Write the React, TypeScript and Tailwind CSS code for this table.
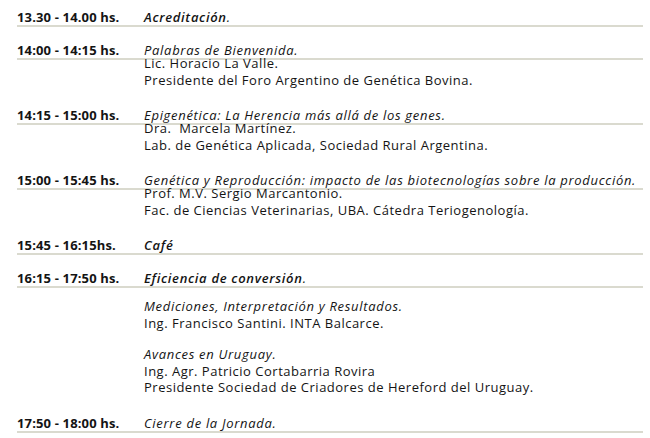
type Item = {
  time: string;
  title: React.ReactNode;
  lines?: string[];
};

const items: Item[] = [
  {
    time: "13.30 - 14.00 hs.",
    title: (
      <>
        <span className="font-semibold">Acreditación</span>.
      </>
    ),
  },
  {
    time: "14:00 - 14:15 hs.",
    title: "Palabras de Bienvenida.",
    lines: ["Lic. Horacio La Valle.", "Presidente del Foro Argentino de Genética Bovina."],
  },
  {
    time: "14:15 - 15:00 hs.",
    title: "Epigenética: La Herencia más allá de los genes.",
    lines: ["Dra.  Marcela Martínez.", "Lab. de Genética Aplicada, Sociedad Rural Argentina."],
  },
  {
    time: "15:00 - 15:45 hs.",
    title: "Genética y Reproducción: impacto de las biotecnologías sobre la producción.",
    lines: ["Prof. M.V. Sergio Marcantonio.", "Fac. de Ciencias Veterinarias, UBA. Cátedra Teriogenología."],
  },
  {
    time: "15:45 - 16:15hs.",
    title: <span className="font-semibold">Café</span>,
  },
  {
    time: "16:15 - 17:50 hs.",
    title: (
      <>
        <span className="font-semibold">Eficiencia de conversión</span>.
      </>
    ),
    lines: [
      "",
      "Mediciones, Interpretación y Resultados.|i",
      "Ing. Francisco Santini. INTA Balcarce.",
      "",
      "Avances en Uruguay.|i",
      "Ing. Agr. Patricio Cortabarria Rovira",
      "Presidente Sociedad de Criadores de Hereford del Uruguay.",
    ],
  },
  {
    time: "17:50 - 18:00 hs.",
    title: "Cierre de la Jornada.",
  },
];

const Row = ({ item }: { item: Item }) => {
  return (
    <div className={item.lines ? "pb-[4px]" : ""}>
      <div className="flex border-b-2 border-[#dadacf] pb-px text-[13px] leading-[13px]">
        <div className="w-[127px] shrink-0 font-bold tracking-[0.15px]">{item.time}</div>
        <div className="italic tracking-[0.7px]">{item.title}</div>
      </div>
      {item.lines && (
        <div className="-mt-[5px] pl-[127px] text-[13px] leading-[16.5px]">
          {item.lines.map((l, i) => {
            const italic = l.endsWith("|i");
            const text = italic ? l.slice(0, -2) : l;
            if (!text) return <div key={i} className="h-[15px]" />;
            return (
              <div
                key={i}
                className={`whitespace-pre ${italic ? "italic tracking-[0.7px]" : "tracking-[0.5px]"}`}
              >
                {text}
              </div>
            );
          })}
        </div>
      )}
    </div>
  );
};

export default function App() {
  return (
    <div className="h-[438px] w-[650px] bg-white text-[#141414]" style={{ fontFamily: "'Open Sans', sans-serif" }}>
      <div className="ml-[17px] flex w-[626px] flex-col gap-[17px] pt-[11px]">
        {items.map((it) => (
          <Row key={it.time} item={it} />
        ))}
      </div>
    </div>
  );
}
